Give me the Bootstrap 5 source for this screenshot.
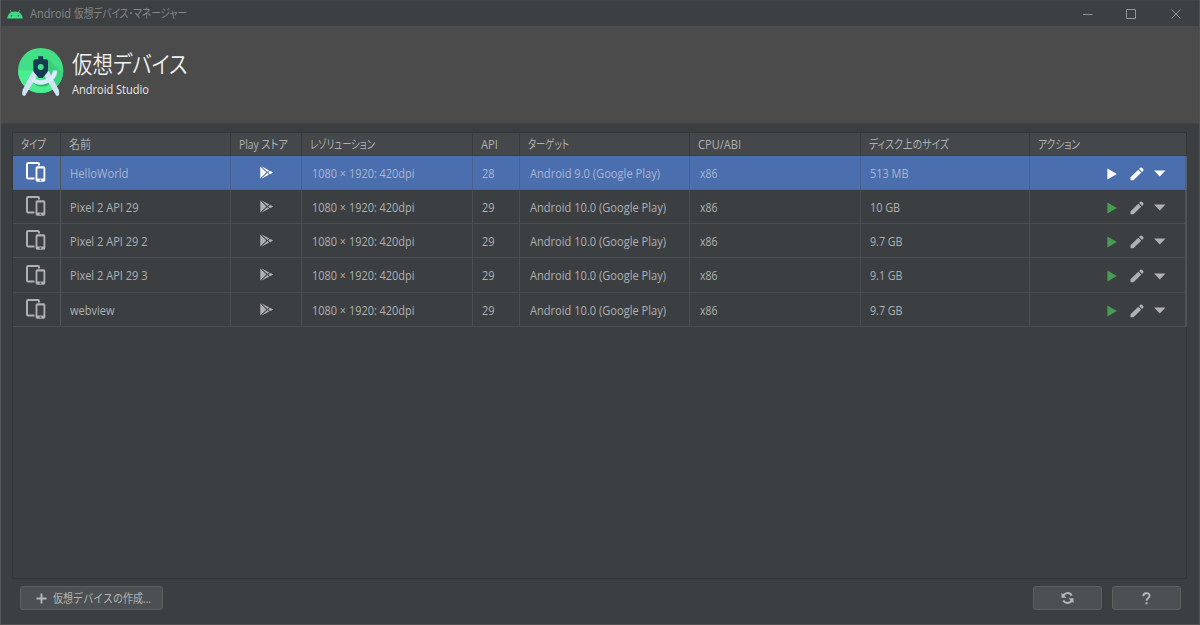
<!DOCTYPE html>
<html lang="ja">
<head>
<meta charset="utf-8">
<title>Android 仮想デバイス･マネージャー</title>
<link href="https://cdn.jsdelivr.net/npm/bootstrap@5.3.0/dist/css/bootstrap.min.css" rel="stylesheet">
<style>
html,body{height:100%;overflow:hidden}
body{background:#3c3f41;font-family:"Open Sans","Noto Sans CJK JP",sans-serif;font-size:12px;line-height:16px;color:#aeb0b2;font-feature-settings:"palt"}
.win{height:625px;border-left:1px solid #57595b;border-right:1px solid #515355;border-bottom:1px solid #505254}
.titlebar{height:26px;background:#3c4043;color:#858788;padding-left:6px;border-top:1px solid #424548}
.titlebar .fit{margin-top:1px}
.hero{height:98px;background:#4b4b4b;border-bottom:1px solid #414243;padding:20px 0 0 14px}
.hero h1{font-size:23.5px;line-height:32px;color:#f1f1f1;font-weight:350;margin:2px 0 2px}
.hero p{color:#e8e8e8;margin:0;line-height:16px;font-size:12px}
.panel{margin:8px 12px 0 11px;height:447px;border:1px solid #333638}
.avds{table-layout:fixed;width:1174px;border-collapse:separate;border-spacing:0;color:inherit;font-size:12px}
.avds th{height:23px;background:#45484a;border-right:1px solid #393c3e;border-bottom:1px solid #3b3d40;padding:2px 0 0 8px;font-weight:400;line-height:16px}
.avds th .fit{margin-bottom:-1px}
.avds td{height:34px;border-right:1px solid #4b4d4e;border-bottom:1px solid #4b4d4e;padding:2px 0 0 10px;vertical-align:middle}
.avds td:nth-child(2),.avds td:nth-child(5),.avds td:nth-child(8),.avds td:last-child{padding-left:9px}
.avds tr:nth-child(4) td{height:35px}
.avds th:last-child{border-right-color:#333638}
.avds td:last-child{border-right:2px solid #505354}
.avds .sel td{background:#4b6eaf;border-right-color:#47608f;border-bottom-color:#526489;color:#a9b6cf}
.avds .sel td:last-child{border-right-color:#5b606b}
.avds tr td:first-child{border-right:1px solid #535658;padding:0 0 1px 12px}
.ic{display:block;fill:#afb1b3;stroke:#afb1b3}
.sel .ic{fill:#fff;stroke:#fff}
.ic.go{fill:#499c54;stroke:none}
.sel .ic.go{fill:#fff}
.fit{display:inline-block;white-space:nowrap;vertical-align:top;height:16px}
.fit>span{display:inline-block;transform-origin:0 50%}
.hero .fit{height:auto}
.footer-bar{padding:7px 18px 0 18.500px}
.sbtn{height:24px;background:#4c5052;border:1px solid #5e6060;border-radius:3px;color:#b3b5b6;padding:0;font-size:12px;line-height:16px}
.sbtn:hover{background:#4c5052}
.w-sq{width:69px}
.w-new{width:143px;padding-left:15px}
</style>
<script src="https://cdn.jsdelivr.net/npm/bootstrap@5.3.0/dist/js/bootstrap.bundle.min.js"></script>
</head>
<body>
<div class="win d-flex flex-column">
  <header class="titlebar d-flex align-items-center flex-shrink-0">
    <svg width="16" height="10" viewBox="0 0 16 10"><path fill="#3ddc84" d="M.2 9.5C.5 6.600 1.900 4.400 4.100 3.300L2.900 1.100 3.400.8 4.700 3.050Q8 1.800 11.300 3.050L12.600.8l.5.3-1.200 2.200C14.100 4.400 15.500 6.600 15.800 9.500Z"/><circle cx="4.500" cy="6.700" r=".75" fill="#304c3d"/><circle cx="11.500" cy="6.700" r=".75" fill="#304c3d"/></svg>
    <span style="margin-left:7px"><span class="fit" data-w="41"><span>Android</span></span></span>
    <span class="fit" style="margin-left:3px" data-w="113"><span>仮想デバイス･マネージャー</span></span>
    <svg class="ms-auto" width="117" height="24" viewBox="0 0 117 24" fill="none" stroke="#929496"><path d="M1 12.500h9.500M44.500 7.500h9v9h-9zM89.500 7.500l9 9M98.500 7.500l-9 9"/></svg>
  </header>
  <section class="hero d-flex flex-shrink-0">
    <svg width="50" height="52" viewBox="15 46 50 52" class="flex-shrink-0">
      <circle cx="40.700" cy="70.500" r="22.600" fill="#42df86"/>
      <path d="M18.100 70.500h45.200a22.600 22.600 0 0 1-45.200 0" fill="#4bee90"/>
      <path d="M47 58l12.500 12.500h3.800a22.600 22.600 0 0 1-9 18L40 76z" fill="#35be75" opacity=".6"/>
      <path d="M33.500 79.500Q38 85 45 83.300T55 70.500" transform="translate(0 2)" fill="none" stroke="#2fb870" stroke-width="2"/>
      <path d="M35.500 75L24 94l.3-3.500L33.500 73zM45.900 75L57.400 94l-.3-3.500L47.900 73z" fill="#c5def1" stroke="#cfe3f5" stroke-width="3.600" stroke-linejoin="round"/>
      <path d="M32.700 79.200Q38 84.500 46.500 81.300T55 70.500" fill="none" stroke="#ddecfb" stroke-width="4.400"/>
      <path fill="#143c50" d="M38.200 56.300h5v3h2.600q2.200 0 2.200 2.200v8.500q0 1.700-1 2.800L42.600 78h-3.800l-4.500-5.200q-1-1.100-1-2.800v-8.500q0-2.200 2.200-2.200h2.700z"/><circle cx="40.700" cy="67" r="3" fill="#48dc8b"/>
    </svg>
    <div style="margin-left:6.500px">
      <h1><span class="fit" data-w="115.5"><span>仮想デバイス</span></span></h1>
      <p><span class="fit" data-w="77"><span>Android Studio</span></span></p>
    </div>
  </section>
  <main class="panel flex-shrink-0">
    <table class="avds">
      <colgroup><col style="width:48px"><col style="width:170px"><col style="width:71px"><col style="width:171px"><col style="width:47px"><col style="width:170px"><col style="width:171px"><col style="width:169px"><col style="width:157px"></colgroup>
      <thead><tr>
        <th><span class="fit" data-w="25"><span>タイプ</span></span></th>
        <th><span class="fit" data-w="22"><span>名前</span></span></th>
        <th><span class="fit" data-w="49"><span>Play ストア</span></span></th>
        <th><span class="fit" data-w="65"><span>レゾリューション</span></span></th>
        <th><span class="fit" data-w="17"><span>API</span></span></th>
        <th><span class="fit" data-w="41"><span>ターゲット</span></span></th>
        <th><span class="fit" data-w="43"><span>CPU/ABI</span></span></th>
        <th><span class="fit" data-w="80"><span>ディスク上のサイズ</span></span></th>
        <th><span class="fit" data-w="42"><span>アクション</span></span></th>
      </tr></thead>
      <tbody id="rows"></tbody>
    </table>
  </main>
  <footer class="footer-bar d-flex">
    <button class="btn sbtn w-new d-flex align-items-center"><svg width="11" height="11" viewBox="0 0 11 11"><path d="M5.500.5v10M.5 5.500h10" stroke="#b5b7b8" stroke-width="1.900"/></svg><span class="fit" style="margin:2px 0 0 6px" data-w="98"><span>仮想デバイスの作成...</span></span></button>
    <button class="btn sbtn w-sq ms-auto d-flex align-items-center justify-content-center"><svg width="13" height="12" viewBox="0 0 13 12"><path d="M2 4.600A4.700 4.700 0 0 1 10.700 3.600M11 7.400A4.700 4.700 0 0 1 2.300 8.400" fill="none" stroke="#b5b7b8" stroke-width="2"/><path d="M.5.700v5h5zM12.500 11.300V6.300h-5z" fill="#b5b7b8"/></svg></button>
    <button class="btn sbtn w-sq d-flex align-items-center justify-content-center" style="margin-left:10px"><svg width="9" height="13" viewBox="0 0 9 13"><path d="M1.300 4.200C1.300 .3 7.600.3 7.600 3.800 7.600 6 4.500 6 4.500 8.800" fill="none" stroke="#b5b7b8" stroke-width="1.900"/><path d="M3.500 10.300h2v1.900h-2z" fill="#b5b7b8"/></svg></button>
  </footer>
</div>
<script>
const devices=[
 ['HelloWorld',58.5,'28','Android 9.0 (Google Play)',130,'513 MB',38.5],
 ['Pixel 2 API 29',68.5,'29','Android 10.0 (Google Play)',136,'10 GB',30],
 ['Pixel 2 API 29 2',77.5,'29','Android 10.0 (Google Play)',136,'9.7 GB',32.5],
 ['Pixel 2 API 29 3',77.5,'29','Android 10.0 (Google Play)',136,'9.1 GB',32.5],
 ['webview',44.5,'29','Android 10.0 (Google Play)',136,'9.7 GB',32.5]];
const t=(s,w)=>`<span class="fit" data-w="${w}"><span>${s}</span></span>`;
document.getElementById('rows').innerHTML=devices.map((d,i)=>`<tr class="${i?'':'sel'}">
<td><svg class="ic" width="22" height="22" viewBox="0 0 22 22"><path d="M14 4.500V3.200Q14 2 12.800 2H3.200Q2 2 2 3.200V16.300Q2 17.500 3.200 17.500H9.500" fill="none" stroke-width="2"/><path d="M12.300 5.300h6.300q1.700 0 1.700 1.700v12q0 1.700-1.700 1.700h-6.300q-1.700 0-1.700-1.700V7q0-1.700 1.700-1.700zM12.400 7.400v10h6.100v-10zM14.700 18.500v1.200h1.600v-1.200z" fill-rule="evenodd" stroke="none"/></svg></td>
<td>${t(d[0],d[1])}</td>
<td><svg class="ic" style="margin:-3px 0 0 19px" width="14" height="13" viewBox="0 0 14 13"><path stroke="none" d="M.3.400L6.300 6.500.3 12.600zM1.300.3L9.200 4.400 7.300 6zM1.300 12.700L9.200 8.600 7.300 7zM10 4.800L13.200 6.500 10 8.200 8.200 6.500z"/></svg></td>
<td>${t('1080 × 1920: 420dpi',102.5)}</td>
<td>${t(d[2],12.5)}</td>
<td>${t(d[3],d[4])}</td>
<td>${t('x86',17.5)}</td>
<td>${t(d[5],d[6])}</td>
<td><div class="d-flex align-items-center" style="padding-left:68px">
<svg class="ic go" width="10" height="12" viewBox="0 0 10 12"><path d="M.4.500L9.900 6 .4 11.500z"/></svg>
<svg class="ic" style="margin-left:13px" width="14" height="14" viewBox="0 0 14 14"><path stroke="none" d="M.5 13.300v-3L8.300 2.800l2.900 2.900-7.700 7.600zM9.100 2l1.200-1.200q.8-.8 1.600 0l1.300 1.300q.8.800 0 1.600L12 4.900z"/></svg>
<svg class="ic" style="margin-left:10px" width="12" height="7" viewBox="0 0 12 7"><path stroke="none" d="M.1.500h11.400L5.800 6.500z"/></svg></div></td></tr>`).join('');
document.querySelectorAll('.fit').forEach(f=>{
  const s=f.firstElementChild,n=s.getBoundingClientRect().width;
  f.style.width=f.dataset.w+'px';
  s.style.transform=`scaleX(${f.dataset.w/n})`;
});
</script>
</body>
</html>
